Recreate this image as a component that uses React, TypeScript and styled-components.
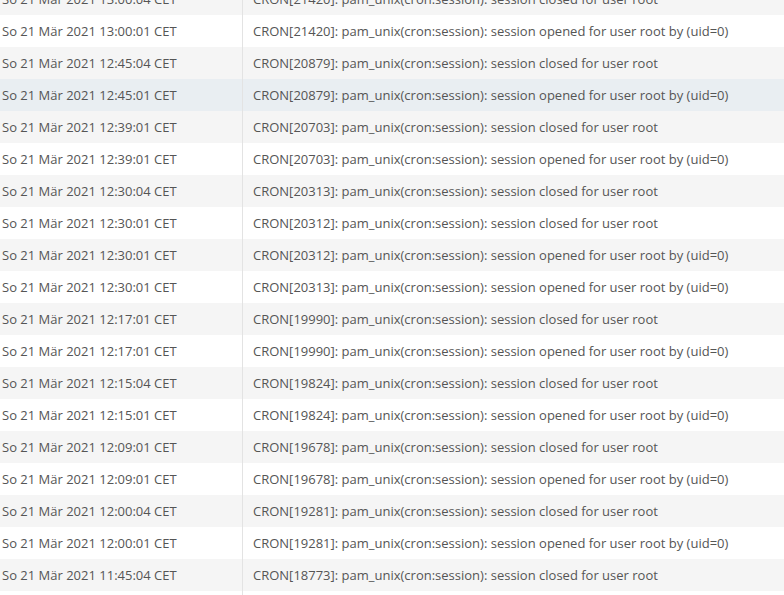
import styled, { createGlobalStyle } from 'styled-components';

const GlobalStyle = createGlobalStyle`
  html, body {
    margin: 0;
    padding: 0;
    background: #ffffff;
    overflow: hidden;
  }
  body {
    font-family: "Open Sans", "Liberation Sans", sans-serif;
  }
`;

const Page = styled.div`
  width: 784px;
  height: 595px;
  overflow: hidden;
  background: #ffffff;
`;

const LogTable = styled.table`
  border-collapse: collapse;
  width: 784px;
  margin-top: -17px;
  table-layout: fixed;
`;

const Row = styled.tr<{ $striped: boolean; $hover?: boolean }>`
  height: 32px;
  background: ${({ $striped, $hover }) =>
    $hover ? '#e9eef2' : $striped ? '#f5f5f5' : '#ffffff'};
`;

const TimeCell = styled.td`
  width: 240px;
  padding: 0 0 0 2px;
  border-right: 1px solid #e3e3e3;
  font-size: 13px;
  color: #555555;
  white-space: nowrap;
  vertical-align: middle;
`;

const MessageCell = styled.td`
  padding: 0 0 0 10px;
  font-size: 13px;
  color: #555555;
  white-space: nowrap;
  vertical-align: middle;
`;

interface LogEntry {
  time: string;
  pid: number;
  opened: boolean;
}

const entries: LogEntry[] = [
  { time: '13:00:04', pid: 21420, opened: false },
  { time: '13:00:01', pid: 21420, opened: true },
  { time: '12:45:04', pid: 20879, opened: false },
  { time: '12:45:01', pid: 20879, opened: true },
  { time: '12:39:01', pid: 20703, opened: false },
  { time: '12:39:01', pid: 20703, opened: true },
  { time: '12:30:04', pid: 20313, opened: false },
  { time: '12:30:01', pid: 20312, opened: false },
  { time: '12:30:01', pid: 20312, opened: true },
  { time: '12:30:01', pid: 20313, opened: true },
  { time: '12:17:01', pid: 19990, opened: false },
  { time: '12:17:01', pid: 19990, opened: true },
  { time: '12:15:04', pid: 19824, opened: false },
  { time: '12:15:01', pid: 19824, opened: true },
  { time: '12:09:01', pid: 19678, opened: false },
  { time: '12:09:01', pid: 19678, opened: true },
  { time: '12:00:04', pid: 19281, opened: false },
  { time: '12:00:01', pid: 19281, opened: true },
  { time: '11:45:04', pid: 18773, opened: false },
  { time: '11:45:01', pid: 18773, opened: true },
];

export default function App() {
  return (
    <Page>
      <GlobalStyle />
      <LogTable>
        <tbody>
          {entries.map((e, i) => (
            <Row key={i} $striped={i % 2 === 0} $hover={i === 3}>
              <TimeCell>So 21 Mär 2021 {e.time} CET</TimeCell>
              <MessageCell>
                CRON[{e.pid}]: pam_unix(cron:session): session{' '}
                {e.opened ? 'opened for user root by (uid=0)' : 'closed for user root'}
              </MessageCell>
            </Row>
          ))}
        </tbody>
      </LogTable>
    </Page>
  );
}
